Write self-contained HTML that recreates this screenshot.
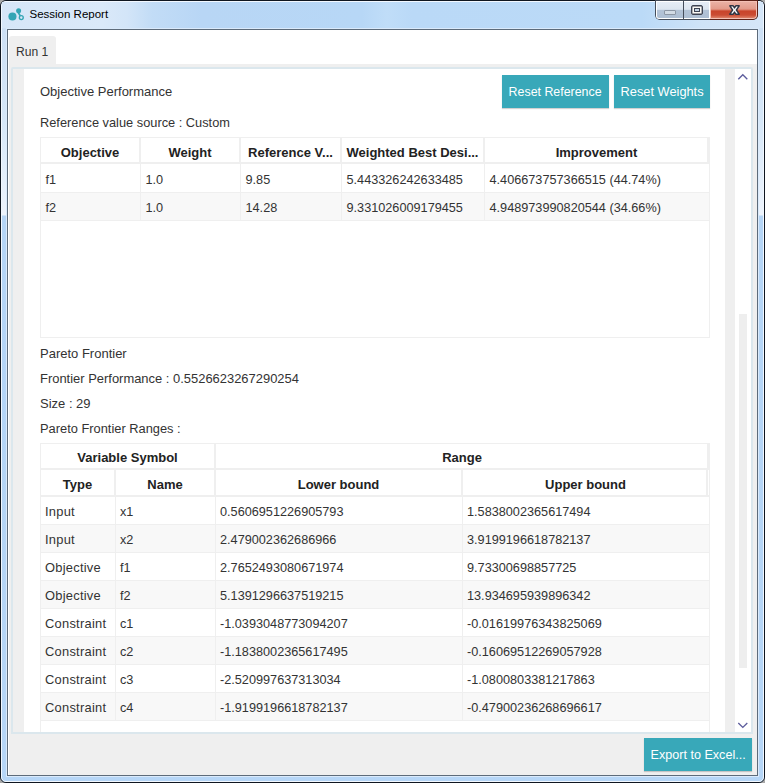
<!DOCTYPE html>
<html><head><meta charset="utf-8">
<style>
*{margin:0;padding:0;box-sizing:border-box}
html,body{width:765px;height:783px;overflow:hidden;background:#a9a9a9}
body{position:relative;font-family:"Liberation Sans",sans-serif;font-size:13px;color:#333}
.a{position:absolute}
.t{white-space:nowrap;line-height:1}
#win{left:0;top:0;width:765px;height:783px;border:1px solid #0f1620;border-radius:6px;
 background:linear-gradient(180deg,#d3e4f7 0px,#cde0f5 30px,#d6e7f8 120px,#eaf2fc 200px,#eef4fc 214px,#b5d5f6 215px,#b6d6f7 783px);overflow:hidden}
#hl{left:1px;top:1px;width:763px;height:781px;border:1px solid #f2f8ff;border-radius:5px}
#tbar{left:2px;top:2px;width:761px;height:26px;
 background:linear-gradient(90deg,#d6e6f8 0px,#dae9f9 100px,#d3e5f8 125px,#c2dcf6 150px,#b8d6f5 200px,#b7d7f6 360px,#c0ddf8 385px,#bad9f7 410px,#bbdaf7 640px,#cfe3f7 700px,#d5e6f8 761px)}
#cl{left:6px;top:28px;width:753px;height:749px;border:1px solid #daeafb}
#client{left:7px;top:29px;width:751px;height:747px;border:1px solid #5d6b7a;background:#fff}
.btn{position:absolute;background:#38a8b9;color:#fff;box-shadow:0 1px 1px rgba(0,0,0,.18)}
</style></head><body>
<div id="win" class="a"></div>
<div id="hl" class="a"></div>
<div id="tbar" class="a"></div>
<div id="cl" class="a"></div>
<div id="client" class="a"></div>

<svg class="a" style="left:6px;top:6px" width="20" height="20" viewBox="0 0 20 20">
<circle cx="6.45" cy="10.55" r="4.05" fill="#33a5b5"/>
<circle cx="12.6" cy="4.7" r="2.5" fill="#33a5b5"/>
<line x1="12.1" y1="6.2" x2="14.3" y2="9.9" stroke="#33a5b5" stroke-width="1.7"/>
<circle cx="15.3" cy="11.6" r="1.95" fill="none" stroke="#33a5b5" stroke-width="1.35"/>
</svg>
<div class="a t" style="left:29.5px;top:9px;font-size:11.5px;color:#000;">Session Report</div>
<div class="a" style="left:655px;top:0px;width:103px;height:20px;background:#454d5a;border-radius:0 0 5px 5px;overflow:hidden">
<div class="a" style="left:1px;top:1px;width:27px;height:18px;background:#fff;border-radius:0 0 0 3px"></div>
<div class="a" style="left:2px;top:2px;width:26px;height:16px;border-radius:0 0 0 2px;background:linear-gradient(180deg,#e6edf6 0px,#dde6f0 7px,#cdd8e6 8px,#b3c3d6 8px,#aebfd3 16px)"></div>
<div class="a" style="left:29px;top:1px;width:26px;height:18px;background:#fff"></div>
<div class="a" style="left:29px;top:2px;width:25px;height:16px;background:linear-gradient(180deg,#e6edf6 0px,#dde6f0 7px,#cdd8e6 8px,#b3c3d6 8px,#aebfd3 16px)"></div>
<div class="a" style="left:55px;top:0px;width:48px;height:20px;background:#5e2218;border-radius:0 0 5px 0"></div>
<div class="a" style="left:55px;top:1px;width:47px;height:18px;background:#f4c0b4;border-radius:0 0 4px 0"></div>
<div class="a" style="left:56px;top:2px;width:45px;height:16px;border-radius:0 0 3px 0;background:linear-gradient(180deg,#eab0a3 0px,#e39a8a 7px,#d8755f 8px,#c9442b 9px,#cb4c33 13px,#dc7f66 16px)"></div>
<div class="a" style="left:9px;top:10px;width:12px;height:5px;background:#d2dbe5;border:1px solid #8c96a4;border-radius:1px"></div>
<div class="a" style="left:36px;top:5px;width:12px;height:10px;border:1px solid #3e4352;background:#faf8f4;border-radius:2px;box-shadow:inset 0 0 0 0.4px #3e4352"></div>
<div class="a" style="left:39px;top:8px;width:6px;height:4px;border:1px solid #3e4352;background:#c4d3e2"></div>
</div>
<svg class="a" style="left:726px;top:3px" width="18" height="14" viewBox="0 0 18 14">
<polygon points="3.8,2.8 7.2,2.8 8.5,4.9 9.8,2.8 13.2,2.8 10.4,7 13.2,11.2 9.8,11.2 8.5,9.1 7.2,11.2 3.8,11.2 6.6,7" fill="#fbfbfb" stroke="#2f3442" stroke-width="1.4" stroke-linejoin="round"/>
</svg>
<div class="a" style="left:9px;top:64px;width:748px;height:711px;background:#efefef"></div>
<div class="a" style="left:9px;top:36px;width:47px;height:28px;background:#efefef;border-radius:3px 3px 0 0"></div>
<div class="a t" style="left:16px;top:46px;font-size:12.1px;color:#333;">Run 1</div>
<div class="a" style="left:11px;top:67px;width:742px;height:667px;border:2px solid #dbe7ed;border-radius:2px;background:#fff"></div>
<div class="a" style="left:13px;top:69px;width:11px;height:663px;background:#efefef"></div>
<div class="a" style="left:725px;top:69px;width:10px;height:663px;background:#efefef"></div>
<div class="a" style="left:739px;top:314px;width:8px;height:354px;background:#eeeeee"></div>
<svg class="a" style="left:736px;top:72px" width="14" height="10" viewBox="0 0 14 10"><path d="M2.3 7.2 L6.8 2.8 L11.3 7.2" fill="none" stroke="#5c5c9c" stroke-width="1.35"/></svg>
<svg class="a" style="left:736px;top:720px" width="14" height="10" viewBox="0 0 14 10"><path d="M2.3 3 L6.8 7.4 L11.3 3" fill="none" stroke="#5c5c9c" stroke-width="1.35"/></svg>
<div class="a t" style="left:40px;top:85px;font-size:13px;color:#333;">Objective Performance</div>
<div class="a t" style="left:40px;top:117px;font-size:12.8px;color:#333;">Reference value source : Custom</div>
<div class="btn" style="left:502px;top:75px;width:107px;height:33px"></div>
<div class="a t" style="left:508.6px;top:86px;font-size:12.4px;color:#fff;">Reset Reference</div>
<div class="btn" style="left:614px;top:75px;width:96px;height:33px"></div>
<div class="a t" style="left:620.6px;top:86px;font-size:12.8px;color:#fff;">Reset Weights</div>
<div class="a" style="left:40px;top:137px;width:670px;height:201px;border:1px solid #efefef;background:#fff"></div>
<div class="a" style="left:41px;top:162px;width:668px;height:2px;background:#efefef"></div>
<div class="a" style="left:139px;top:138px;width:2px;height:25px;background:#efefef"></div>
<div class="a" style="left:140px;top:164px;width:1px;height:56px;background:#efefef"></div>
<div class="a" style="left:239px;top:138px;width:2px;height:25px;background:#efefef"></div>
<div class="a" style="left:240px;top:164px;width:1px;height:56px;background:#efefef"></div>
<div class="a" style="left:340px;top:138px;width:2px;height:25px;background:#efefef"></div>
<div class="a" style="left:341px;top:164px;width:1px;height:56px;background:#efefef"></div>
<div class="a" style="left:483px;top:138px;width:2px;height:25px;background:#efefef"></div>
<div class="a" style="left:484px;top:164px;width:1px;height:56px;background:#efefef"></div>
<div class="a" style="left:41px;top:192px;width:668px;height:1px;background:#efefef"></div>
<div class="a" style="left:41px;top:193px;width:668px;height:27px;background:#f8f8f8"></div>
<div class="a" style="left:140px;top:193px;width:1px;height:27px;background:#efefef"></div>
<div class="a" style="left:240px;top:193px;width:1px;height:27px;background:#efefef"></div>
<div class="a" style="left:341px;top:193px;width:1px;height:27px;background:#efefef"></div>
<div class="a" style="left:484px;top:193px;width:1px;height:27px;background:#efefef"></div>
<div class="a" style="left:41px;top:220px;width:668px;height:1px;background:#efefef"></div>
<div class="a" style="left:707px;top:138px;width:2px;height:25px;background:#efefef"></div>
<div class="a t" style="left:40px;top:146px;width:100px;text-align:center;font-size:13px;font-weight:bold;color:#222">Objective</div>
<div class="a t" style="left:140px;top:146px;width:100px;text-align:center;font-size:13px;font-weight:bold;color:#222">Weight</div>
<div class="a t" style="left:240px;top:146px;width:101px;text-align:center;font-size:13px;font-weight:bold;color:#222">Reference V...</div>
<div class="a t" style="left:341px;top:146px;width:143px;text-align:center;font-size:13px;font-weight:bold;color:#222">Weighted Best Desi...</div>
<div class="a t" style="left:484px;top:146px;width:225px;text-align:center;font-size:13px;font-weight:bold;color:#222">Improvement</div>
<div class="a t" style="left:45.5px;top:174px;font-size:12.7px;color:#333;">f1</div>
<div class="a t" style="left:145.5px;top:174px;font-size:12.7px;color:#333;">1.0</div>
<div class="a t" style="left:245.5px;top:174px;font-size:12.7px;color:#333;">9.85</div>
<div class="a t" style="left:346.5px;top:174px;font-size:12.7px;color:#333;">5.443326242633485</div>
<div class="a t" style="left:489.5px;top:174px;font-size:12.7px;color:#333;">4.406673757366515 (44.74%)</div>
<div class="a t" style="left:45.5px;top:202px;font-size:12.7px;color:#333;">f2</div>
<div class="a t" style="left:145.5px;top:202px;font-size:12.7px;color:#333;">1.0</div>
<div class="a t" style="left:245.5px;top:202px;font-size:12.7px;color:#333;">14.28</div>
<div class="a t" style="left:346.5px;top:202px;font-size:12.7px;color:#333;">9.331026009179455</div>
<div class="a t" style="left:489.5px;top:202px;font-size:12.7px;color:#333;">4.948973990820544 (34.66%)</div>
<div class="a t" style="left:40px;top:347px;font-size:13px;color:#333;">Pareto Frontier</div>
<div class="a t" style="left:40px;top:373px;font-size:12.95px;color:#333;">Frontier Performance : 0.5526623267290254</div>
<div class="a t" style="left:40px;top:397px;font-size:13px;color:#333;">Size : 29</div>
<div class="a t" style="left:40px;top:423px;font-size:12.85px;color:#333;">Pareto Frontier Ranges :</div>
<div class="a" style="left:40px;top:443px;width:670px;height:300px;border:1px solid #efefef;background:#fff"></div>
<div class="a" style="left:41px;top:468px;width:668px;height:2px;background:#efefef"></div>
<div class="a" style="left:214px;top:444px;width:2px;height:24px;background:#efefef"></div>
<div class="a" style="left:707px;top:444px;width:2px;height:24px;background:#efefef"></div>
<div class="a t" style="left:40px;top:451px;width:175px;text-align:center;font-size:13px;font-weight:bold;color:#222">Variable Symbol</div>
<div class="a t" style="left:215px;top:451px;width:494px;text-align:center;font-size:13px;font-weight:bold;color:#222">Range</div>
<div class="a" style="left:41px;top:495px;width:668px;height:2px;background:#efefef"></div>
<div class="a" style="left:114px;top:470px;width:2px;height:25px;background:#efefef"></div>
<div class="a" style="left:214px;top:470px;width:2px;height:25px;background:#efefef"></div>
<div class="a" style="left:461px;top:470px;width:2px;height:25px;background:#efefef"></div>
<div class="a" style="left:706px;top:470px;width:2px;height:25px;background:#efefef"></div>
<div class="a t" style="left:40px;top:478px;width:75px;text-align:center;font-size:13px;font-weight:bold;color:#222">Type</div>
<div class="a t" style="left:115px;top:478px;width:100px;text-align:center;font-size:13px;font-weight:bold;color:#222">Name</div>
<div class="a t" style="left:215px;top:478px;width:247px;text-align:center;font-size:13px;font-weight:bold;color:#222">Lower bound</div>
<div class="a t" style="left:462px;top:478px;width:247px;text-align:center;font-size:13px;font-weight:bold;color:#222">Upper bound</div>
<div class="a" style="left:41px;top:524px;width:668px;height:1px;background:#efefef"></div>
<div class="a" style="left:115px;top:497px;width:1px;height:28px;background:#efefef"></div>
<div class="a" style="left:215px;top:497px;width:1px;height:28px;background:#efefef"></div>
<div class="a" style="left:462px;top:497px;width:1px;height:28px;background:#efefef"></div>
<div class="a t" style="left:45px;top:506px;font-size:12.9px;color:#333;letter-spacing:0.25px">Input</div>
<div class="a t" style="left:120px;top:506px;font-size:12.7px;color:#333;">x1</div>
<div class="a t" style="left:220px;top:506px;font-size:12.7px;color:#333;">0.5606951226905793</div>
<div class="a t" style="left:467px;top:506px;font-size:12.7px;color:#333;">1.5838002365617494</div>
<div class="a" style="left:41px;top:525px;width:668px;height:27px;background:#f8f8f8"></div>
<div class="a" style="left:41px;top:552px;width:668px;height:1px;background:#efefef"></div>
<div class="a" style="left:115px;top:525px;width:1px;height:28px;background:#efefef"></div>
<div class="a" style="left:215px;top:525px;width:1px;height:28px;background:#efefef"></div>
<div class="a" style="left:462px;top:525px;width:1px;height:28px;background:#efefef"></div>
<div class="a t" style="left:45px;top:534px;font-size:12.9px;color:#333;letter-spacing:0.25px">Input</div>
<div class="a t" style="left:120px;top:534px;font-size:12.7px;color:#333;">x2</div>
<div class="a t" style="left:220px;top:534px;font-size:12.7px;color:#333;">2.479002362686966</div>
<div class="a t" style="left:467px;top:534px;font-size:12.7px;color:#333;">3.9199196618782137</div>
<div class="a" style="left:41px;top:580px;width:668px;height:1px;background:#efefef"></div>
<div class="a" style="left:115px;top:553px;width:1px;height:28px;background:#efefef"></div>
<div class="a" style="left:215px;top:553px;width:1px;height:28px;background:#efefef"></div>
<div class="a" style="left:462px;top:553px;width:1px;height:28px;background:#efefef"></div>
<div class="a t" style="left:45px;top:562px;font-size:12.9px;color:#333;letter-spacing:0.25px">Objective</div>
<div class="a t" style="left:120px;top:562px;font-size:12.7px;color:#333;">f1</div>
<div class="a t" style="left:220px;top:562px;font-size:12.7px;color:#333;">2.7652493080671974</div>
<div class="a t" style="left:467px;top:562px;font-size:12.7px;color:#333;">9.73300698857725</div>
<div class="a" style="left:41px;top:581px;width:668px;height:27px;background:#f8f8f8"></div>
<div class="a" style="left:41px;top:608px;width:668px;height:1px;background:#efefef"></div>
<div class="a" style="left:115px;top:581px;width:1px;height:28px;background:#efefef"></div>
<div class="a" style="left:215px;top:581px;width:1px;height:28px;background:#efefef"></div>
<div class="a" style="left:462px;top:581px;width:1px;height:28px;background:#efefef"></div>
<div class="a t" style="left:45px;top:590px;font-size:12.9px;color:#333;letter-spacing:0.25px">Objective</div>
<div class="a t" style="left:120px;top:590px;font-size:12.7px;color:#333;">f2</div>
<div class="a t" style="left:220px;top:590px;font-size:12.7px;color:#333;">5.1391296637519215</div>
<div class="a t" style="left:467px;top:590px;font-size:12.7px;color:#333;">13.934695939896342</div>
<div class="a" style="left:41px;top:636px;width:668px;height:1px;background:#efefef"></div>
<div class="a" style="left:115px;top:609px;width:1px;height:28px;background:#efefef"></div>
<div class="a" style="left:215px;top:609px;width:1px;height:28px;background:#efefef"></div>
<div class="a" style="left:462px;top:609px;width:1px;height:28px;background:#efefef"></div>
<div class="a t" style="left:45px;top:618px;font-size:12.9px;color:#333;letter-spacing:0.25px">Constraint</div>
<div class="a t" style="left:120px;top:618px;font-size:12.7px;color:#333;">c1</div>
<div class="a t" style="left:220px;top:618px;font-size:12.7px;color:#333;">-1.0393048773094207</div>
<div class="a t" style="left:467px;top:618px;font-size:12.7px;color:#333;">-0.01619976343825069</div>
<div class="a" style="left:41px;top:637px;width:668px;height:27px;background:#f8f8f8"></div>
<div class="a" style="left:41px;top:664px;width:668px;height:1px;background:#efefef"></div>
<div class="a" style="left:115px;top:637px;width:1px;height:28px;background:#efefef"></div>
<div class="a" style="left:215px;top:637px;width:1px;height:28px;background:#efefef"></div>
<div class="a" style="left:462px;top:637px;width:1px;height:28px;background:#efefef"></div>
<div class="a t" style="left:45px;top:646px;font-size:12.9px;color:#333;letter-spacing:0.25px">Constraint</div>
<div class="a t" style="left:120px;top:646px;font-size:12.7px;color:#333;">c2</div>
<div class="a t" style="left:220px;top:646px;font-size:12.7px;color:#333;">-1.1838002365617495</div>
<div class="a t" style="left:467px;top:646px;font-size:12.7px;color:#333;">-0.16069512269057928</div>
<div class="a" style="left:41px;top:692px;width:668px;height:1px;background:#efefef"></div>
<div class="a" style="left:115px;top:665px;width:1px;height:28px;background:#efefef"></div>
<div class="a" style="left:215px;top:665px;width:1px;height:28px;background:#efefef"></div>
<div class="a" style="left:462px;top:665px;width:1px;height:28px;background:#efefef"></div>
<div class="a t" style="left:45px;top:674px;font-size:12.9px;color:#333;letter-spacing:0.25px">Constraint</div>
<div class="a t" style="left:120px;top:674px;font-size:12.7px;color:#333;">c3</div>
<div class="a t" style="left:220px;top:674px;font-size:12.7px;color:#333;">-2.520997637313034</div>
<div class="a t" style="left:467px;top:674px;font-size:12.7px;color:#333;">-1.0800803381217863</div>
<div class="a" style="left:41px;top:693px;width:668px;height:27px;background:#f8f8f8"></div>
<div class="a" style="left:41px;top:720px;width:668px;height:1px;background:#efefef"></div>
<div class="a" style="left:115px;top:693px;width:1px;height:28px;background:#efefef"></div>
<div class="a" style="left:215px;top:693px;width:1px;height:28px;background:#efefef"></div>
<div class="a" style="left:462px;top:693px;width:1px;height:28px;background:#efefef"></div>
<div class="a t" style="left:45px;top:702px;font-size:12.9px;color:#333;letter-spacing:0.25px">Constraint</div>
<div class="a t" style="left:120px;top:702px;font-size:12.7px;color:#333;">c4</div>
<div class="a t" style="left:220px;top:702px;font-size:12.7px;color:#333;">-1.9199196618782137</div>
<div class="a t" style="left:467px;top:702px;font-size:12.7px;color:#333;">-0.47900236268696617</div>
<div class="a" style="left:11px;top:732px;width:742px;height:2px;background:#dbe7ed"></div>
<div class="a" style="left:9px;top:734px;width:748px;height:41px;background:#efefef"></div>
<div class="btn" style="left:644px;top:738px;width:108px;height:33px"></div>
<div class="a t" style="left:650.5px;top:749px;font-size:12.6px;color:#fff;">Export to Excel...</div>
</body></html>
